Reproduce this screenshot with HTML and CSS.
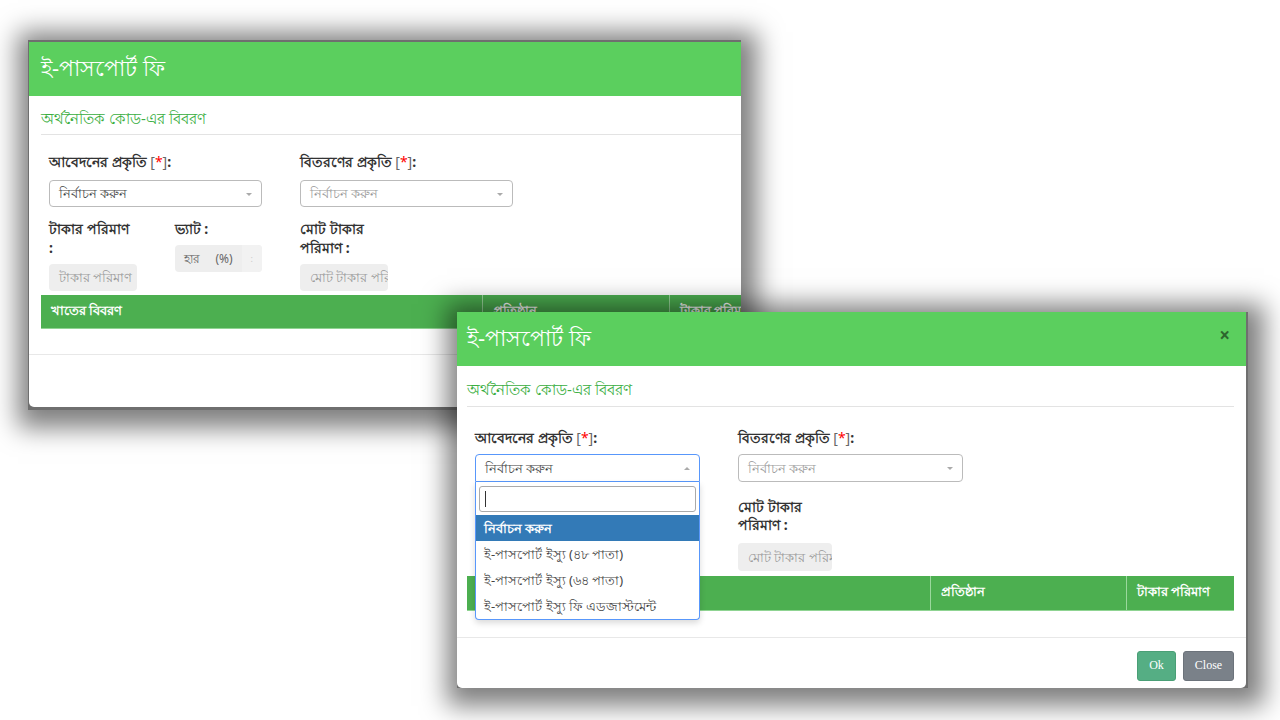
FILE: index.html
```html
<!DOCTYPE html>
<html lang="bn">
<head>
  <meta charset="UTF-8" />
  <meta name="viewport" content="width=device-width, initial-scale=1.0" />
  <title>ই-পাসপোর্ট ফি</title>
  <link rel="stylesheet" href="styles.css">
</head>
<body>
  <div class="canvas">

    <!-- back screenshot: closed form -->
    <div class="shot shot-back">
      <div class="modal">
        <div class="modal-header">
          <h4 class="modal-title">ই-পাসপোর্ট ফি</h4>
        </div>
        <div class="modal-body">
          <h5 class="section-title">অর্থনৈতিক কোড-এর বিবরণ</h5>
          <div class="form">
            <div class="form-row">
              <div class="field wide">
                <label>আবেদনের প্রকৃতি <span class="req">[<b>*</b>]</span>:</label>
                <div class="select"><span class="value">নির্বাচন করুন</span><i class="caret"></i></div>
              </div>
              <div class="field wide">
                <label>বিতরণের প্রকৃতি <span class="req">[<b>*</b>]</span>:</label>
                <div class="select"><span class="placeholder">নির্বাচন করুন</span><i class="caret"></i></div>
              </div>
            </div>
            <div class="form-row row-amounts">
              <div class="field">
                <label>টাকার পরিমাণ<br>:</label>
                <div class="input">টাকার পরিমাণ</div>
              </div>
              <div class="field">
                <label>ভ্যাট :</label>
                <div class="input-group">
                  <span class="ig-text">হার</span>
                  <span class="ig-addon">(%)</span>
                  <span class="ig-end">:</span>
                </div>
              </div>
              <div class="field">
                <label>মোট টাকার<br>পরিমাণ :</label>
                <div class="input">মোট টাকার পরিমাণ</div>
              </div>
            </div>
          </div>
          <table class="grid-table">
            <thead>
              <tr>
                <th class="c1">খাতের বিবরণ</th>
                <th class="c2">প্রতিষ্ঠান</th>
                <th class="c3">টাকার পরিমাণ</th>
              </tr>
            </thead>
          </table>
        </div>
        <div class="modal-footer"></div>
      </div>
    </div>

    <!-- front screenshot: first select opened -->
    <div class="shot shot-front">
      <div class="modal">
        <div class="modal-header">
          <h4 class="modal-title">ই-পাসপোর্ট ফি</h4>
          <span class="close">&times;</span>
        </div>
        <div class="modal-body">
          <h5 class="section-title">অর্থনৈতিক কোড-এর বিবরণ</h5>
          <div class="form">
            <div class="form-row">
              <div class="field wide">
                <label>আবেদনের প্রকৃতি <span class="req">[<b>*</b>]</span>:</label>
                <div class="select-wrap">
                  <div class="select open"><span class="value">নির্বাচন করুন</span><i class="caret"></i></div>
                  <div class="dropdown">
                    <div class="search"><span class="cursor"></span></div>
                    <ul class="options">
                      <li class="active">নির্বাচন করুন</li>
                      <li>ই-পাসপোর্ট ইস্যু (৪৮ পাতা)</li>
                      <li>ই-পাসপোর্ট ইস্যু (৬৪ পাতা)</li>
                      <li>ই-পাসপোর্ট ইস্যু ফি এডজাস্টমেন্ট</li>
                    </ul>
                  </div>
                </div>
              </div>
              <div class="field wide">
                <label>বিতরণের প্রকৃতি <span class="req">[<b>*</b>]</span>:</label>
                <div class="select"><span class="placeholder">নির্বাচন করুন</span><i class="caret"></i></div>
              </div>
            </div>
            <div class="form-row row-amounts">
              <div class="field covered">
                <label><span class="hid">টাকার পরিমাণ</span><br>:</label>
              </div>
              <div class="field covered"></div>
              <div class="field">
                <label>মোট টাকার<br>পরিমাণ :</label>
                <div class="input">মোট টাকার পরিমাণ</div>
              </div>
            </div>
          </div>
          <table class="grid-table">
            <thead>
              <tr>
                <th class="c1"><span class="hid">খাতের বিবরণ</span></th>
                <th class="c2">প্রতিষ্ঠান</th>
                <th class="c3">টাকার পরিমাণ</th>
              </tr>
            </thead>
          </table>
        </div>
        <div class="modal-footer">
          <button class="btn btn-ok">Ok</button>
          <button class="btn btn-close">Close</button>
        </div>
      </div>
    </div>

  </div>
</body>
</html>
```

FILE: styles.css
```css
* {
  box-sizing: border-box;
}
html, body {
  margin: 0;
}
body {
  background: #fff;
  font-family: "Noto Sans", "Lato", sans-serif;
  color: #333;
  width: 1280px;
  height: 720px;
  overflow: hidden;
}
.canvas {
  position: relative;
  width: 1280px;
  height: 720px;
}

/* the two pasted screenshots */
.shot {
  position: absolute;
  overflow: hidden;
  background: #6f6f6f;
  box-shadow: 3px 5px 24px 13px rgba(0,0,0,0.5);
}
.shot-back {
  left: 28px;
  top: 40px;
  width: 713px;
  height: 370px;
  padding: 2px 0 0 1px;
  --col: 125.5px;
}
.shot-front {
  left: 457px;
  top: 312px;
  width: 791px;
  height: 376px;
  padding-right: 2px;
  --col: 131.5px;
}

.modal {
  background: #fff;
  border-radius: 0 0 5px 5px;
}
.shot-back .modal {
  width: 755px;
  height: 365px;
}
.shot-front .modal {
  width: 789px;
  height: 376px;
}

.modal-header {
  height: 54px;
  background: #5bcf5e;
  display: flex;
  align-items: center;
  justify-content: space-between;
  padding: 0 16px 0 10px;
}
.shot-back .modal-header {
  height: 54px;
  padding-left: 12px;
}
.modal-title {
  margin: 0;
  font-size: 22px;
  font-weight: normal;
  color: #fff;
}
.close {
  color: #000;
  opacity: 0.5;
  font-size: 19px;
  font-weight: bold;
  line-height: 1;
  margin-top: -8px;
}

.modal-body {
  padding: 12px 12px 0 10px;
}
.shot-back .modal-body {
  padding: 11px 12px 0 12px;
}
.section-title {
  margin: 0;
  font-size: 15px;
  font-weight: normal;
  line-height: 22px;
  color: #3aae3f;
  padding-bottom: 6px;
  border-bottom: 1px solid #e3e3e3;
}
.shot-back .section-title {
  padding-bottom: 5px;
}

.form {
  padding: 21px 8px 0;
}
.shot-back .form {
  padding: 17px 8px 0;
}
.form-row {
  display: grid;
  grid-template-columns: repeat(6, var(--col));
}
.field.wide {
  grid-column: span 2;
}
.field label {
  display: block;
  font-size: 14px;
  font-weight: bold;
  line-height: 20px;
  margin-bottom: 6px;
  white-space: nowrap;
}
.shot-back .field label {
  margin-bottom: 8px;
}
.hid {
  visibility: hidden;
}
.req {
  color: #666;
  font-weight: normal;
}
.req b {
  color: #f00;
  font-weight: normal;
}
.row-amounts {
  margin-top: 16px;
}
.row-amounts .field label {
  line-height: 18px;
  margin-bottom: 9px;
}
.shot-back .row-amounts {
  margin-top: 12px;
}
.shot-back .row-amounts .field label {
  line-height: 19px;
  margin-bottom: 7px;
}

/* select2 style boxes */
.select-wrap {
  position: relative;
  width: calc(var(--col) * 2 - 38px);
}
.select {
  position: relative;
  width: calc(var(--col) * 2 - 38px);
  height: 28px;
  border: 1px solid #bbb;
  border-radius: 4px;
  padding-left: 9px;
  font-size: 13px;
  line-height: 26px;
}
.shot-back .select {
  height: 27px;
  line-height: 25px;
}
.select .value {
  color: #444;
}
.select .placeholder {
  color: #999;
}
.caret {
  position: absolute;
  right: 9px;
  top: 12px;
  border-left: 3.5px solid transparent;
  border-right: 3.5px solid transparent;
  border-top: 3.5px solid #aaa;
}
.select.open {
  border-color: #5897fb;
  border-radius: 4px 4px 0 0;
}
.select.open .caret {
  border-top: 0;
  border-bottom: 3.5px solid #aaa;
}
.dropdown {
  position: absolute;
  top: 100%;
  left: 0;
  right: 0;
  z-index: 5;
  background: #fff;
  border: 1px solid #5897fb;
  border-top: 0;
  border-radius: 0 0 4px 4px;
  box-shadow: 0 3px 6px rgba(0,0,0,0.15);
}
.search {
  margin: 4px 3px 3px;
  height: 26px;
  border: 1px solid #aaa;
  border-radius: 3px;
  padding: 4px 5px;
}
.cursor {
  display: block;
  width: 1px;
  height: 16px;
  background: #333;
}
.options {
  list-style: none;
  margin: 0;
  padding: 0;
}
.options li {
  height: 26px;
  line-height: 26px;
  padding-left: 8px;
  font-size: 13px;
  color: #444;
  white-space: nowrap;
}
.options li.active {
  background: #337ab7;
  color: #fff;
  font-weight: bold;
}

/* disabled inputs */
.input {
  width: calc(var(--col) - 38px);
  height: 28px;
  background: #eee;
  border-radius: 4px;
  padding: 0 10px;
  font-size: 13px;
  line-height: 28px;
  color: #999;
  white-space: nowrap;
  overflow: hidden;
}
.shot-back .input {
  height: 27px;
  line-height: 27px;
}
.input-group {
  display: flex;
  width: calc(var(--col) - 38px);
  height: 27px;
  background: #eee;
  border-radius: 4px;
  overflow: hidden;
  font-size: 12px;
  line-height: 27px;
  color: #666;
}
.ig-text {
  padding-left: 9px;
  width: 41px;
}
.ig-addon {
  width: 26px;
}
.ig-end {
  flex: 1;
  background: #f2f2f2;
  color: #ccc;
  font-size: 9px;
  text-align: center;
}

/* table header */
.grid-table {
  border-collapse: collapse;
  margin-top: 5px;
  table-layout: fixed;
  width: 767px;
}
.grid-table th {
  background: #4caf50;
  color: #fff;
  text-align: left;
  font-size: 13px;
  font-weight: bold;
  height: 34px;
  padding: 0 10px;
  border-left: 1px solid #9ad89c;
  border-bottom: 1px solid #8fd492;
  white-space: nowrap;
  overflow: hidden;
}
.grid-table th.c1 {
  border-left: 0;
  width: 463px;
}
.grid-table th.c2 {
  width: 196px;
}
.shot-back .grid-table {
  width: 730px;
  margin-top: 4px;
}
.shot-back .grid-table th {
  height: 33px;
}
.shot-back .grid-table th.c1 {
  width: 441px;
}
.shot-back .grid-table th.c2 {
  width: 187px;
}

.modal-footer {
  margin-top: 26px;
  border-top: 1px solid #e8e8e8;
  padding: 13px 12px 8px;
  display: flex;
  justify-content: flex-end;
  gap: 7px;
}
.shot-back .modal-footer {
  margin-top: 25px;
}
.btn {
  height: 30px;
  border: 0;
  border-radius: 3px;
  color: #fff;
  font-family: "Liberation Serif", serif;
  font-size: 12px;
  padding: 0;
}
.btn-ok {
  width: 39px;
  background: #55ae84;
  border: 1px solid #4a9f76;
}
.btn-close {
  width: 51px;
  background: #7a8189;
  border: 1px solid #6c737b;
}
```
